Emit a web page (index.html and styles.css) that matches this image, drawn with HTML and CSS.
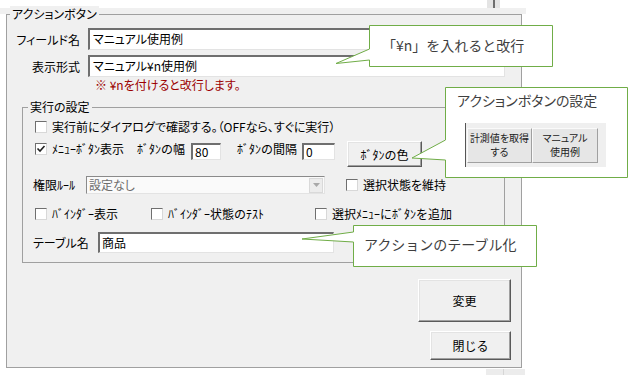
FILE: index.html
```html
<!DOCTYPE html>
<html lang="ja">
<head>
    <meta charset="UTF-8">
    <meta name="viewport" content="width=device-width, initial-scale=1.0">
    <title>アクションボタン</title>
    <link rel="stylesheet" href="styles.css">
</head>
<body>
    <div class="screen">
        <div class="topbar"><span class="grip"></span></div>

        <div class="group outer">
            <span class="group-title">アクションボタン</span>

            <div class="form-row">
                <label class="field-label">フィールド名</label>
                <div class="textbox">マニュアル使用例</div>
            </div>
            <div class="form-row second">
                <label class="field-label">表示形式</label>
                <div class="textbox">マニュアル¥n使用例</div>
            </div>
            <p class="note">※ ¥nを付けると改行します。</p>

            <div class="group inner">
                <span class="group-title">実行の設定</span>

                <div class="row row-confirm">
                    <span class="check"></span>
                    <span class="check-text">実行前にダイアログで確認する。（OFFなら、すぐに実行）</span>
                </div>

                <div class="row row-menu">
                    <span class="check checked">
                        <svg width="10" height="10" viewBox="0 0 10 10"><polyline points="1.5,4.5 4,7 8.5,2" fill="none" stroke="#222" stroke-width="1.6"/></svg>
                    </span>
                    <span class="check-text hw menu-label">ﾒﾆｭｰﾎﾞﾀﾝ表示</span>
                    <span class="small-label hw width-label">ﾎﾞﾀﾝの幅</span>
                    <div class="textbox small w30">80</div>
                    <span class="small-label hw gap-label">ﾎﾞﾀﾝの間隔</span>
                    <div class="textbox small w33">0</div>
                    <button type="button" class="win-btn hw color-btn">ﾎﾞﾀﾝの色</button>
                </div>

                <div class="row row-rule">
                    <span class="small-label hw rule-label">権限ﾙｰﾙ</span>
                    <div class="combo">
                        <span class="combo-text">設定なし</span>
                        <span class="combo-arrow">
                            <svg width="7" height="4" viewBox="0 0 7 4"><polygon points="0,0 7,0 3.5,4" fill="#a8a8a8"/></svg>
                        </span>
                    </div>
                    <span class="check keep-check"></span>
                    <span class="check-text">選択状態を維持</span>
                </div>

                <div class="row row-binder">
                    <div class="check-item w116">
                        <span class="check"></span>
                        <span class="check-text hw">ﾊﾞｲﾝﾀﾞｰ表示</span>
                    </div>
                    <div class="check-item w164">
                        <span class="check"></span>
                        <span class="check-text hw">ﾊﾞｲﾝﾀﾞｰ状態のﾃｽﾄ</span>
                    </div>
                    <div class="check-item">
                        <span class="check"></span>
                        <span class="check-text hw">選択ﾒﾆｭｰにﾎﾞﾀﾝを追加</span>
                    </div>
                </div>

                <div class="row row-table">
                    <span class="small-label table-label">テーブル名</span>
                    <div class="textbox table-box">商品</div>
                </div>
            </div>

            <div class="actions">
                <button type="button" class="win-btn btn-change">変更</button>
                <button type="button" class="win-btn btn-close">閉じる</button>
            </div>
        </div>
        <div class="bottom-stub"></div>

        <!-- callouts -->
        <div class="callout callout-newline">
            <svg width="220" height="44" viewBox="0 0 220 44">
                <path d="M35.5 1.5 H218.5 V42.5 H35.5 V36 L2 39.5 L35.5 25 Z" fill="#fff" stroke="#70ad47" stroke-width="1"/>
            </svg>
            <span class="callout-text">「¥n」を入れると改行</span>
        </div>

        <div class="callout callout-button">
            <svg width="219" height="93" viewBox="0 0 219 93">
                <path d="M35.5 1.5 H217.5 V91.5 H35.5 V74 L2 72 L35.5 54 Z" fill="#fff" stroke="#70ad47" stroke-width="1"/>
            </svg>
            <span class="callout-text">アクションボタンの設定</span>
            <div class="mini-bar">
                <span class="mini-btn">計測値を取得<br>する</span>
                <span class="mini-btn">マニュアル<br>使用例</span>
            </div>
        </div>

        <div class="callout callout-table">
            <svg width="241" height="44" viewBox="0 0 241 44">
                <path d="M55.5 1.5 H238.5 V42.5 H55.5 V18 L4 15 L55.5 8 Z" fill="#fff" stroke="#70ad47" stroke-width="1"/>
            </svg>
            <span class="callout-text">アクションのテーブル化</span>
        </div>
    </div>
</body>
</html>
```

FILE: styles.css
```css
* {
    box-sizing: border-box;
}
body {
    margin: 0;
    background: #ffffff;
    font-family: "Noto Sans CJK JP", "Noto Sans", sans-serif;
    font-size: 12px;
    color: #000;
    font-feature-settings: "palt";
}
.screen {
    position: relative;
    width: 633px;
    height: 375px;
    overflow: hidden;
}
/* half-width kana: keep full glyph advance */
.hw {
    font-feature-settings: normal;
}

/* window frame */
.topbar {
    position: relative;
    margin-top: 8px;
    width: 526px;
    height: 6px;
    background: #f0f0f0;
}
.grip {
    position: absolute;
    top: -8px;
    left: 487px;
    width: 13px;
    height: 8px;
    background: linear-gradient(to right, #e4e4e4 6px, #6e6e6e 6px, #6e6e6e 8px, #e4e4e4 8px);
}
.bottom-stub {
    margin: 1px 0 0 486px;
    width: 39px;
    height: 6px;
    background: linear-gradient(to right, #ececec 17px, #d6d6d6 17px, #d6d6d6 18px, #ececec 18px);
}

/* group boxes */
.group {
    position: relative;
    border: 1px solid #a0a0a0;
    background: #f0f0f0;
}
.group-title {
    position: absolute;
    top: -9px;
    left: 3px;
    padding: 0 2px;
    line-height: 16px;
    background: #f0f0f0;
}
.outer {
    margin-left: 6px;
    width: 516px;
    height: 354px;
    padding-top: 13px;
}
.inner {
    margin: 14px 0 0 15px;
    width: 483px;
    padding: 12px 0 9px 12px;
}
.inner .group-title {
    left: 5px;
}

/* top fields */
.form-row {
    display: grid;
    grid-template-columns: 81px 417px;
    align-items: center;
    height: 22px;
}
.form-row.second {
    margin-top: 5px;
}
.field-label {
    text-align: right;
    padding-right: 8px;
}
.textbox {
    height: 22px;
    background: #fff;
    border-style: solid;
    border-width: 2px 1px 1px 2px;
    border-color: #6f6f6f #e3e3e3 #e3e3e3 #6f6f6f;
    padding-left: 3px;
    line-height: 18px;
    white-space: nowrap;
    overflow: hidden;
}
.note {
    margin: 0;
    padding-left: 88px;
    line-height: 16px;
    color: #9c0000;
}

/* rows in 実行の設定 */
.row {
    display: flex;
    align-items: center;
}
.row-confirm {
    height: 14px;
}
.row-menu {
    align-items: flex-start;
    height: 26px;
    margin-top: 7px;
}
.row-rule {
    height: 18px;
    margin-top: 9px;
}
.row-binder {
    height: 13px;
    margin-top: 13px;
}
.row-table {
    height: 21px;
    margin-top: 12px;
}
.check {
    flex: none;
    display: flex;
    align-items: center;
    justify-content: center;
    width: 12px;
    height: 12px;
    background: #fff;
    border: 1px solid;
    border-color: #6f6f6f #d8d8d8 #d8d8d8 #6f6f6f;
}
.row-menu .check {
    margin-top: 2px;
}
.check-text {
    margin-left: 5px;
    line-height: 16px;
    white-space: nowrap;
}
.menu-label {
    width: 85px;
    flex: none;
}
.small-label {
    flex: none;
    line-height: 16px;
    white-space: nowrap;
}
.width-label {
    width: 54px;
}
.gap-label {
    width: 65px;
    margin-left: 16px;
}
.textbox.small {
    margin-top: 2px;
    height: 17px;
    line-height: 14px;
    padding-left: 2px;
    flex: none;
}
.w30 {
    width: 30px;
}
.w33 {
    width: 33px;
}
.check-item {
    display: flex;
    align-items: center;
    flex: none;
}
.w116 {
    width: 116px;
}
.w164 {
    width: 164px;
}
.rule-label {
    width: 53px;
    margin-left: -2px;
}
.combo {
    position: relative;
    flex: none;
    width: 239px;
    height: 18px;
    background: #fafafa;
    border: 1px solid;
    border-color: #8a8a8a #e3e3e3 #e3e3e3 #8a8a8a;
    display: flex;
    align-items: center;
}
.combo-text {
    padding-left: 2px;
    color: #6d6d6d;
    line-height: 16px;
}
.combo-arrow {
    margin-left: auto;
    width: 14px;
    height: 15px;
    margin-right: 1px;
    background: #ececec;
    border: 1px solid #d9d9d9;
    display: flex;
    align-items: center;
    justify-content: center;
}
.keep-check {
    margin-left: 21px;
}
.table-label {
    width: 65px;
    margin-left: -2px;
}
.table-box {
    width: 236px;
    height: 21px;
    line-height: 17px;
    padding-left: 2px;
}

/* buttons */
.win-btn {
    flex: none;
    font-family: inherit;
    font-size: 12px;
    color: #000;
    background: #f0f0f0;
    border: 1px solid;
    border-color: #ffffff #5a5a5a #5a5a5a #ffffff;
    box-shadow: inset -1px -1px 0 #a0a0a0, inset 1px 1px 0 #e3e3e3;
    padding: 0;
}
.color-btn {
    margin-left: 12px;
    width: 75px;
    height: 26px;
}
.actions {
    display: flex;
    flex-direction: column;
    align-items: flex-end;
    margin: 16px 10px 0 0;
}
.btn-change {
    width: 93px;
    height: 43px;
}
.btn-close {
    width: 81px;
    height: 29px;
    margin-top: 9px;
}

/* callouts */
.callout {
    position: absolute;
}
.callout svg {
    display: block;
}
.callout-text {
    position: absolute;
    font-size: 14px;
    line-height: 20px;
    color: #3f3f3f;
    white-space: nowrap;
    font-feature-settings: normal;
}
.callout-newline {
    left: 334px;
    top: 24px;
}
.callout-newline .callout-text {
    left: 48px;
    top: 11px;
}
.callout-button {
    left: 410px;
    top: 86px;
}
.callout-button .callout-text {
    left: 47px;
    top: 4px;
    font-feature-settings: "palt";
}
.callout-table {
    left: 298px;
    top: 224px;
}
.callout-table .callout-text {
    left: 66px;
    top: 10px;
}
.mini-bar {
    position: absolute;
    left: 55px;
    top: 37px;
    width: 141px;
    height: 44px;
    background: #efefef;
    border-left: 1px solid #555;
    display: flex;
    align-items: center;
    padding-left: 1px;
}
.mini-btn {
    display: flex;
    align-items: center;
    justify-content: center;
    text-align: center;
    height: 35px;
    font-size: 10px;
    line-height: 14px;
    color: #222;
    background: #e6e6e6;
    border: 1px solid;
    border-color: #fafafa #a0a0a0 #a0a0a0 #fafafa;
}
.mini-btn:first-child {
    width: 65px;
}
.mini-btn:last-child {
    width: 66px;
}
```
